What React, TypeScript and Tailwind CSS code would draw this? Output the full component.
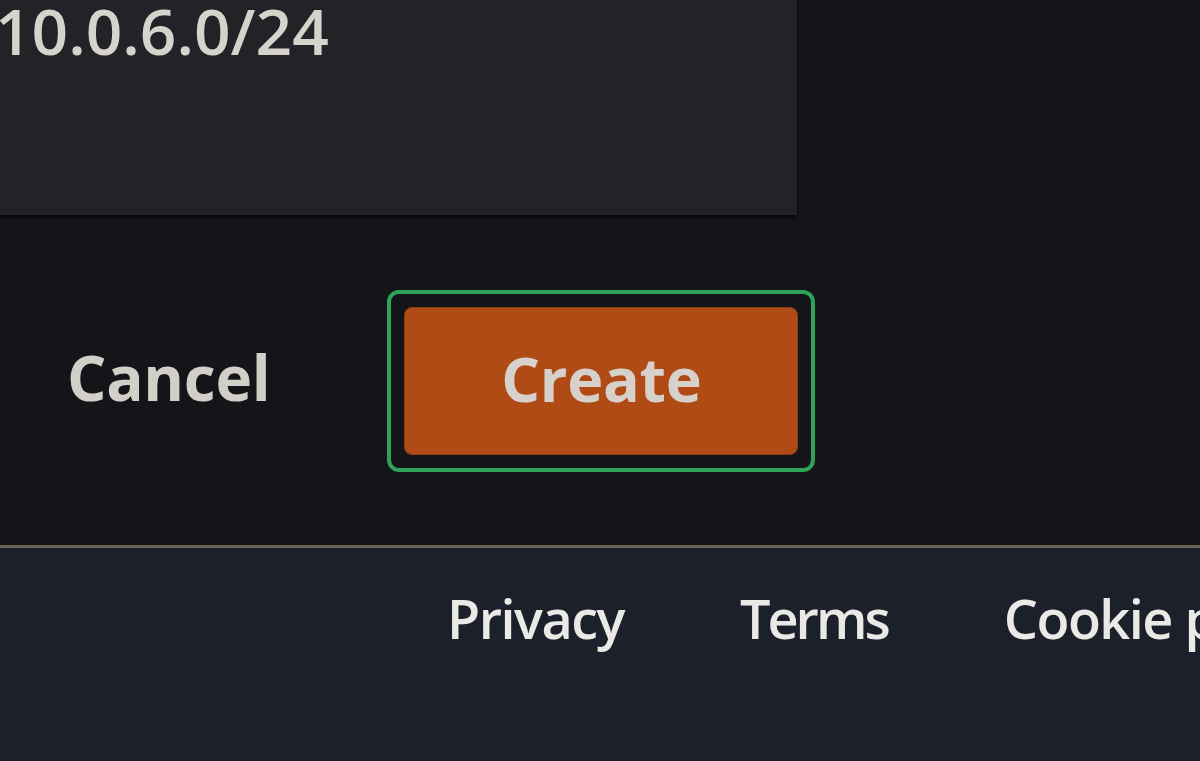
export default function App() {
    return (
        <div
            className="w-[1200px] h-[761px] overflow-hidden bg-[#141519] flex flex-col"
            style={{ fontFamily: '"Open Sans", "Noto Sans", sans-serif' }}
        >
            {/* ─── Form panel (cropped) ─────────────────────────────── */}
            <div className="w-[797px] h-[215px] bg-[#222326] shadow-[0_3px_3px_rgba(0,0,0,0.6)] flex-shrink-0">
                <p className="-ml-[5px] -mt-[9px] text-[64px] font-semibold leading-[80px] text-[#d6d2cc] tracking-[0px]">
                    10.0.6.0/24
                </p>
            </div>

            {/* ─── Actions ──────────────────────────────────────────── */}
            <div className="h-[330px] flex items-center flex-shrink-0 pt-[2px]">
                <button className="ml-[67px] -mt-[8px] text-[62px] font-bold text-[#d2cec8] leading-none tracking-[-0.3px]">
                    Cancel
                </button>
                <div className="ml-[117px] w-[428px] h-[182px] rounded-[12px] border-[4px] border-[#2ea257] p-[13px]">
                    <button className="w-full h-full rounded-[8px] bg-[#b04b16] border border-[#8f3d12] text-[61px] font-bold text-[#d6d1cb] leading-none tracking-[-0.3px] pb-[6px]">
                        Create
                    </button>
                </div>
            </div>

            {/* ─── Footer ───────────────────────────────────────────── */}
            <footer className="flex-1 bg-[#1b202a] border-t-[3px] border-[#6b6457] flex items-start pt-[35px] pl-[447px] gap-[116px] whitespace-nowrap">
                <a className="text-[54px] font-semibold text-[#ebe9e5] leading-[70px] tracking-[-1.5px]">Privacy</a>
                <a className="text-[54px] font-semibold text-[#ebe9e5] leading-[70px] tracking-[-3px]">Terms</a>
                <a className="text-[54px] font-semibold text-[#ebe9e5] leading-[70px] tracking-[-1.5px]">Cookie preferences</a>
            </footer>
        </div>
    );
}
